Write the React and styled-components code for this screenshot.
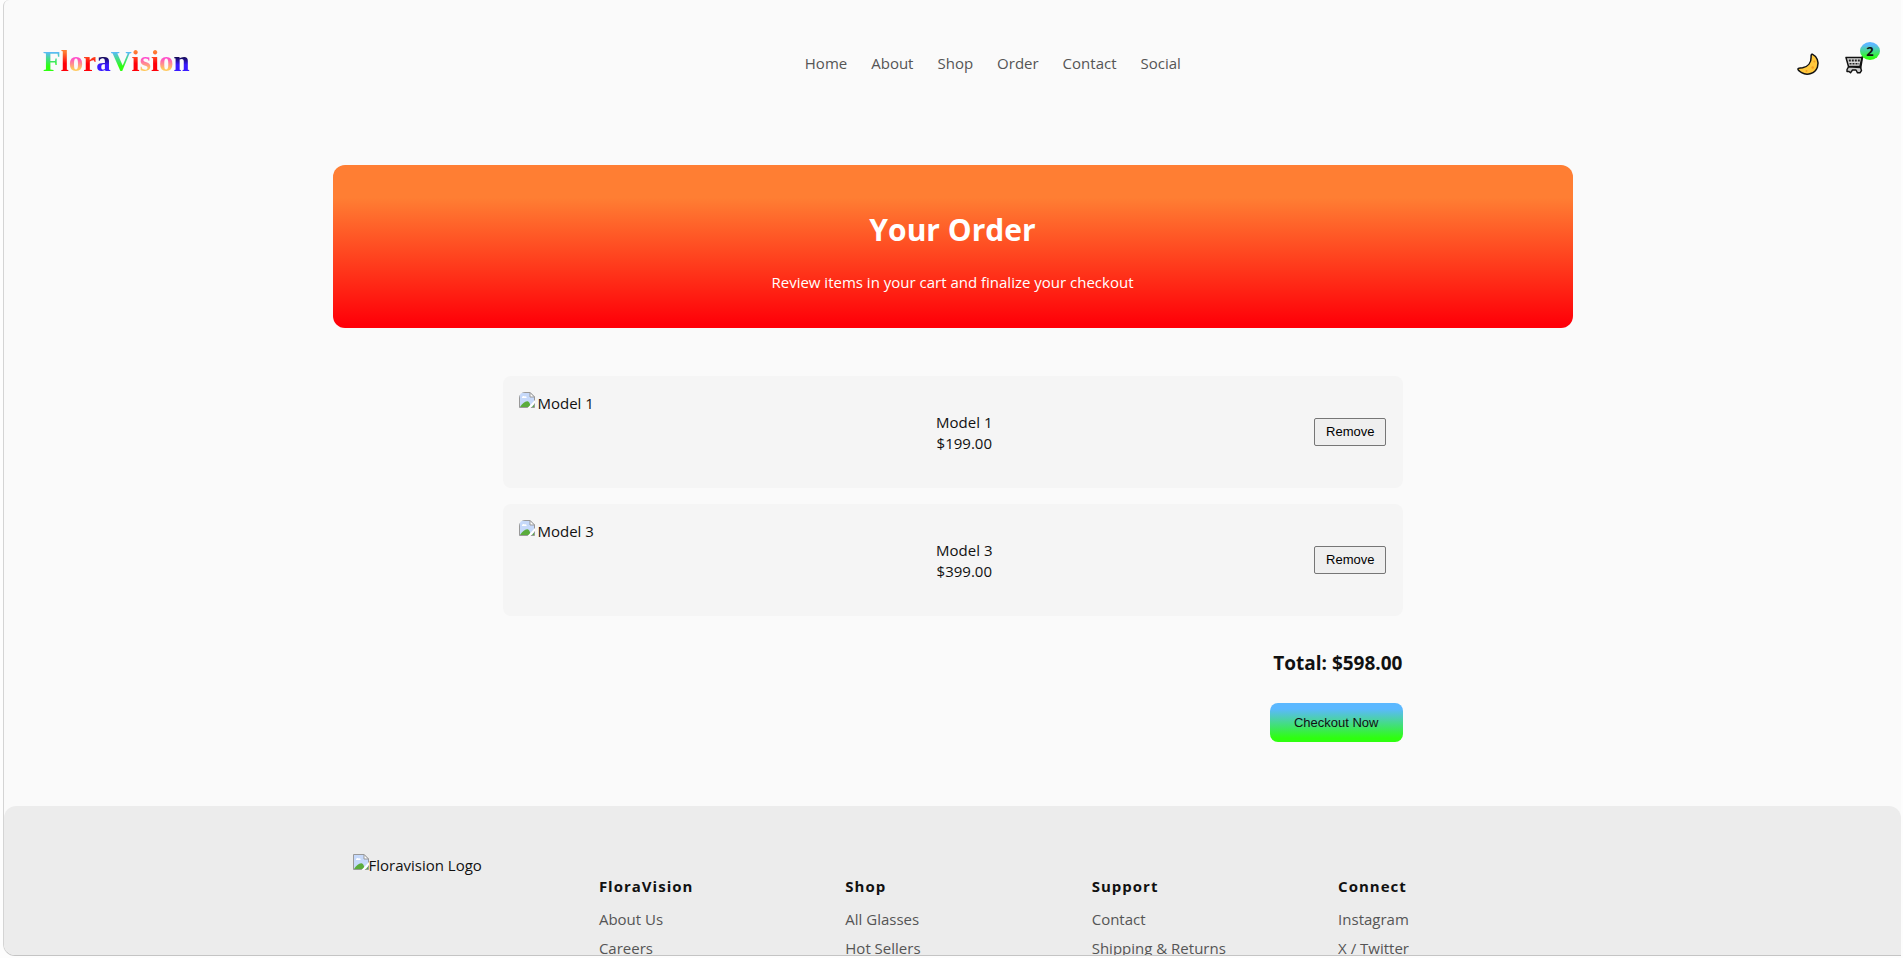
import React, { useState } from 'react';
import styled, { createGlobalStyle } from 'styled-components';

const GREEN = 'linear-gradient(180deg, #5bb8ff 15%, #2eff0f 90%)';
const RED = 'linear-gradient(180deg, #ff7e33 20%, #ff0008 98%)';
const LETTER_GREEN = 'linear-gradient(180deg, #5bb8ff 15%, #2eff0f 70%)';
const LETTER_RED = 'linear-gradient(180deg, #ff7e33 15%, #ff0008 60%)';
const LETTER_PINK = 'linear-gradient(180deg, #ff2ee0 30%, #ffc85c 80%)';
const LETTER_BLUE = 'linear-gradient(180deg, #140a50 35%, #3a1aff 65%)';

const logoLetters = [
    ['F', LETTER_GREEN], ['l', LETTER_RED], ['o', LETTER_PINK], ['r', LETTER_RED], ['a', LETTER_BLUE],
    ['V', LETTER_GREEN], ['i', LETTER_RED], ['s', LETTER_PINK], ['i', LETTER_RED], ['o', LETTER_PINK], ['n', LETTER_BLUE],
];

const navLinks = ['Home', 'About', 'Shop', 'Order', 'Contact', 'Social'];

const footerColumns = [
    { title: 'FloraVision', links: ['About Us', 'Careers'] },
    { title: 'Shop', links: ['All Glasses', 'Hot Sellers'] },
    { title: 'Support', links: ['Contact', 'Shipping & Returns'] },
    { title: 'Connect', links: ['Instagram', 'X / Twitter'] },
];

const MoonIcon = () => (
    <svg width="24" height="24" viewBox="0 0 24 24" aria-hidden="true">
        <path d="M16.3 2.2C20.8 4.4 23.4 10 21.4 15.2C19 21.4 11.4 24 5.6 20.6C3.4 19.4 1.8 17.8 1.9 16.8C2.1 15.6 4 16.2 6.6 15.8C12 14.8 15.2 10.6 15.1 5.2C15 3.5 15.2 1.9 16.3 2.2Z" fill="#ffc83d" stroke="#111" strokeWidth="1.5" strokeLinejoin="round" />
        <circle cx="18.4" cy="9.4" r="1" fill="#f59f23" />
        <circle cx="16.7" cy="15.5" r="1.3" fill="#f59f23" />
        <circle cx="10.5" cy="19" r="1" fill="#f59f23" />
    </svg>
);

const CartIcon = () => (
    <svg width="22" height="22" viewBox="0 0 22 22" aria-hidden="true">
        <path d="M20.5 1.5L18.5 3.5L16.6 15" fill="none" stroke="#111" strokeWidth="1.6" strokeLinecap="round" strokeLinejoin="round" />
        <path d="M2 4.5H18L16 13.5H4.5Z" fill="#d8d8d8" stroke="#111" strokeWidth="1.5" strokeLinejoin="round" />
        <path d="M4.8 7.5H16" stroke="#222" strokeWidth="2" strokeDasharray="2 1" />
        <path d="M5.5 10.8H15.2" stroke="#222" strokeWidth="1.6" strokeDasharray="2 1" />
        <path d="M4.5 13.8L3 16.5V18.5H5L6.5 19.8L8.5 17H12L13.5 19.8H16L17.5 17.5L16.5 14.5Z" fill="#ccc" stroke="#111" strokeWidth="1.4" strokeLinejoin="round" />
    </svg>
);

const BrokenImage = () => (
    <svg width="16" height="16" viewBox="0 0 16 16" aria-hidden="true">
        <path d="M0.5 0.5H11L15.5 5V15.5H0.5Z" fill="#c6d9fa" stroke="#999" />
        <path d="M3 5.5C3 4 5 3.5 5.5 4.5C7 4 8 5 7.5 6H3Z" fill="#fff" />
        <path d="M1 15C3 11.5 6 9 8.5 9.2C10 9.5 11 11 11.5 15Z" fill="#5aac3c" />
        <path d="M13 15L15 12.5V15Z" fill="#5aac3c" />
        <path d="M8.5 16L16 8V11L11.5 16Z" fill="#fff" />
        <path d="M11 0.5V5H15.5Z" fill="#fff" stroke="#999" />
    </svg>
);

const App = () => {
    const [items, setItems] = useState([
        { name: 'Model 1', price: 199 },
        { name: 'Model 3', price: 399 },
    ]);
    const total = items.reduce((sum, item) => sum + item.price, 0);

    const removeItem = (name) => setItems(items.filter(item => item.name !== name));

    return (
        <>
            <GlobalStyle />
            <Window>
                <Header>
                    <Logo href="#home">
                        {logoLetters.map(([letter, fill], i) => (
                            <LogoLetter key={i} $fill={fill}>{letter}</LogoLetter>
                        ))}
                    </Logo>
                    <Nav>
                        {navLinks.map(link => (
                            <NavLink key={link} href={`#${link.toLowerCase()}`}>{link}</NavLink>
                        ))}
                    </Nav>
                    <Actions>
                        <IconButton aria-label="Toggle dark mode"><MoonIcon /></IconButton>
                        <IconButton aria-label="Cart">
                            <CartIcon />
                            <Badge>{items.length}</Badge>
                        </IconButton>
                    </Actions>
                </Header>

                <Banner>
                    <BannerTitle>Your Order</BannerTitle>
                    <BannerText>Review items in your cart and finalize your checkout</BannerText>
                </Banner>

                <Cart>
                    {items.map(item => (
                        <CartItem key={item.name}>
                            <ItemImage>
                                <BrokenImage />
                                <AltText>{item.name}</AltText>
                            </ItemImage>
                            <ItemInfo>
                                <p>{item.name}</p>
                                <p>${item.price.toFixed(2)}</p>
                            </ItemInfo>
                            <RemoveBtn onClick={() => removeItem(item.name)}>Remove</RemoveBtn>
                        </CartItem>
                    ))}
                    <Summary>
                        <Total>Total: ${total.toFixed(2)}</Total>
                        <CheckoutBtn>Checkout Now</CheckoutBtn>
                    </Summary>
                </Cart>

                <Footer>
                    <FooterGrid>
                        <FooterLogo>
                            <BrokenImage />
                            <AltText>Floravision Logo</AltText>
                        </FooterLogo>
                        {footerColumns.map(column => (
                            <FooterColumn key={column.title}>
                                <FooterTitle>{column.title}</FooterTitle>
                                {column.links.map(link => (
                                    <FooterLink key={link} href="#footer">{link}</FooterLink>
                                ))}
                            </FooterColumn>
                        ))}
                    </FooterGrid>
                </Footer>
            </Window>
        </>
    );
};

const GlobalStyle = createGlobalStyle`
    * {
        box-sizing: border-box;
        margin: 0;
        padding: 0;
    }
    body {
        background-color: #fdfdfd;
        color: #111;
        font-family: "Open Sans", "Noto Sans", sans-serif;
        font-size: 15px;
        line-height: 21px;
        overflow: hidden;
    }
    a {
        text-decoration: none;
    }
`;

const Window = styled.div`
    height: calc(100vh - 2px);
    margin: 0 2px 0 3px;
    background-color: #fafafa;
    border-left: 1px solid #d4d4d4;
    border-bottom: 1px solid #c4c4c4;
    border-radius: 6px 0 0 12px;
    overflow: hidden;
`;

const Header = styled.header`
    display: flex;
    align-items: center;
    justify-content: space-between;
    height: 127px;
    padding: 0 35px 0 39px;
`;

const Logo = styled.a`
    display: flex;
    padding-bottom: 6px;
    font-family: "Liberation Serif", serif;
    font-size: 29px;
    font-weight: 700;
    line-height: 26px;
`;

const LogoLetter = styled.span`
    background: ${props => props.$fill};
    background-clip: text;
    -webkit-background-clip: text;
    color: transparent;
`;

const Nav = styled.nav`
    display: flex;
    gap: 24px;
`;

const NavLink = styled.a`
    color: #555;
`;

const Actions = styled.div`
    display: flex;
    gap: 24px;
`;

const IconButton = styled.button`
    position: relative;
    display: flex;
    align-items: center;
    border: none;
    background: none;
    cursor: pointer;
`;

const Badge = styled.span`
    position: absolute;
    top: -10px;
    right: -14px;
    width: 20px;
    border-radius: 50%;
    background: ${GREEN};
    color: #111;
    font-family: "Open Sans", sans-serif;
    font-size: 13px;
    font-weight: 700;
    line-height: 18px;
    text-align: center;
`;

const Banner = styled.section`
    max-width: 1240px;
    margin: 38px auto 48px;
    padding: 40px 32px 34px;
    border-radius: 12px;
    background: ${RED};
    color: #fff;
    text-align: center;
`;

const BannerTitle = styled.h1`
    margin-bottom: 16px;
    font-size: 30px;
    line-height: 50px;
`;

const BannerText = styled.p`
    line-height: 23px;
`;

const Cart = styled.main`
    display: flex;
    flex-direction: column;
    gap: 16px;
    max-width: 900px;
    margin: 0 auto 64px;
`;

const CartItem = styled.article`
    display: flex;
    align-items: center;
    justify-content: space-between;
    padding: 16px;
    border-radius: 8px;
    background-color: #f5f5f5;
`;

const ItemImage = styled.div`
    display: flex;
    gap: 3px;
    width: 96px;
    height: 80px;
    border-radius: 6px;
    overflow: hidden;
    white-space: nowrap;
`;

const AltText = styled.span`
    padding-top: 1px;
`;

const ItemInfo = styled.div`
    padding-top: 2px;
    text-align: center;
`;

const RemoveBtn = styled.button`
    padding: 5px 11px;
    border: 1px solid #767676;
    border-radius: 2px;
    background-color: #efefef;
    color: #000;
    font-family: "Liberation Sans", Arial, sans-serif;
    font-size: 13px;
    line-height: 16px;
    cursor: pointer;
`;

const Summary = styled.div`
    display: flex;
    flex-direction: column;
    align-items: flex-end;
    gap: 24px;
    padding-top: 16px;
`;

const Total = styled.h3`
    font-size: 19px;
    line-height: 31px;
`;

const CheckoutBtn = styled.button`
    padding: 12px 24px;
    border: none;
    border-radius: 8px;
    background: ${GREEN};
    color: #111;
    font-family: "Liberation Sans", Arial, sans-serif;
    font-size: 13px;
    line-height: 15px;
    cursor: pointer;
`;

const Footer = styled.footer`
    padding: 48px 32px;
    border-radius: 12px 12px 0 0;
    background-color: #ececec;
`;

const FooterGrid = styled.div`
    display: grid;
    grid-template-columns: repeat(5, 1fr);
    gap: 32px;
    max-width: 1200px;
    margin: 0 auto;
`;

const FooterLogo = styled.div`
    display: flex;
`;

const FooterColumn = styled.div`
    display: flex;
    flex-direction: column;
    align-items: flex-start;
    gap: 8px;
    padding-top: 22px;
`;

const FooterTitle = styled.h4`
    margin-bottom: 4px;
    font-size: 15px;
    letter-spacing: 1px;
`;

const FooterLink = styled.a`
    color: #555;
`;

export default App;
